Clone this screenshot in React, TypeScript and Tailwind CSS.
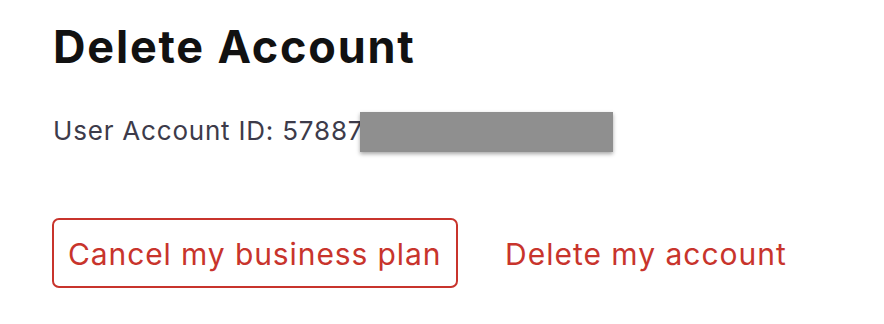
import React from "react";

export default function App() {
  return (
    <div className="w-[884px] h-[324px] bg-white pl-[53px] pt-[20px]" style={{ fontFamily: "Inter, 'Noto Sans', sans-serif" }}>
      <h1 className="text-[45px] font-bold leading-[54px] text-[#111111] tracking-[1.8px]">Delete Account</h1>
      <div className="mt-[37px] flex items-start h-[40px]">
        <span className="text-[26px] text-[#3d3b4a] leading-[40px] tracking-[0.8px]">User Account ID: 57887</span>
        <div className="mt-[1px] w-[253px] h-[40px] bg-[#8f8f8f] shadow-[0_2px_4px_rgba(0,0,0,0.35)] -ml-[3px]" />
      </div>
      <div className="mt-[67px] flex items-center gap-[47px] -ml-[1px]">
        <button className="h-[70px] w-[406px] pl-[14px] pt-[2px] text-left border-2 border-[#c8342c] rounded-[7px] text-[#c8342c] text-[30px] leading-none tracking-[0.9px] whitespace-nowrap">
          Cancel my business plan
        </button>
        <button className="text-[#c8342c] text-[30px] leading-none tracking-[1px] pt-[2px] whitespace-nowrap">Delete my account</button>
      </div>
    </div>
  );
}
